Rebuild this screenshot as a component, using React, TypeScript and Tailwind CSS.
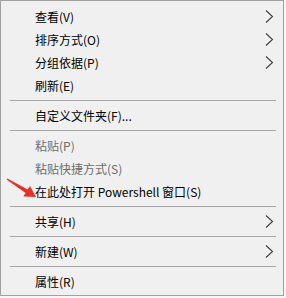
import React from "react";

type Item = { type: "item"; label: string; sub?: boolean; disabled?: boolean } | { type: "sep" };

const items: Item[] = [
  { type: "item", label: "查看(V)", sub: true },
  { type: "item", label: "排序方式(O)", sub: true },
  { type: "item", label: "分组依据(P)", sub: true },
  { type: "item", label: "刷新(E)" },
  { type: "sep" },
  { type: "item", label: "自定义文件夹(F)..." },
  { type: "sep" },
  { type: "item", label: "粘贴(P)", disabled: true },
  { type: "item", label: "粘贴快捷方式(S)", disabled: true },
  { type: "item", label: "在此处打开 Powershell 窗口(S)" },
  { type: "sep" },
  { type: "item", label: "共享(H)", sub: true },
  { type: "sep" },
  { type: "item", label: "新建(W)", sub: true },
  { type: "sep" },
  { type: "item", label: "属性(R)" },
];

function Chevron() {
  return (
    <svg width="9" height="13" viewBox="0 0 9 13" className="shrink-0">
      <path d="M1 0.5 L7.5 6.5 L1 12.5" fill="none" stroke="#404040" strokeWidth="1.1" />
    </svg>
  );
}

export default function App() {
  return (
    <div className="relative w-[286px] h-[298px] bg-[#f7f7f7] overflow-hidden">
      <div
        className="w-[284px] h-[296px] border border-[#a0a0a0] bg-[#f0f0f0] pt-[4px] pb-[2px] flex flex-col text-[12px] leading-none text-black"
        style={{ fontFamily: '"Noto Sans CJK SC", "Noto Sans", sans-serif' }}
      >
        {items.map((it, i) =>
          it.type === "sep" ? (
            <div key={i} className="h-[7px] flex items-center pl-[9px] pr-[7px]">
              <div className="h-px w-full bg-[#a6a6a6]" />
            </div>
          ) : (
            <div key={i} className="h-[23px] flex items-center pl-[34px] pr-[9px]">
              <span className={"flex-1 " + (it.disabled ? "text-[#6d6d6d]" : "text-black")}>{it.label}</span>
              {it.sub ? <Chevron /> : null}
            </div>
          )
        )}
      </div>
      <svg className="absolute left-0 top-0" width="286" height="298" viewBox="0 0 286 298">
        <polygon
          points="6.6,179.6 25.6,192.9 23.3,196.5 36,197 30.0,186.0 27.7,189.5 7.4,178.4"
          fill="#e8302a"
        />
      </svg>
    </div>
  );
}
